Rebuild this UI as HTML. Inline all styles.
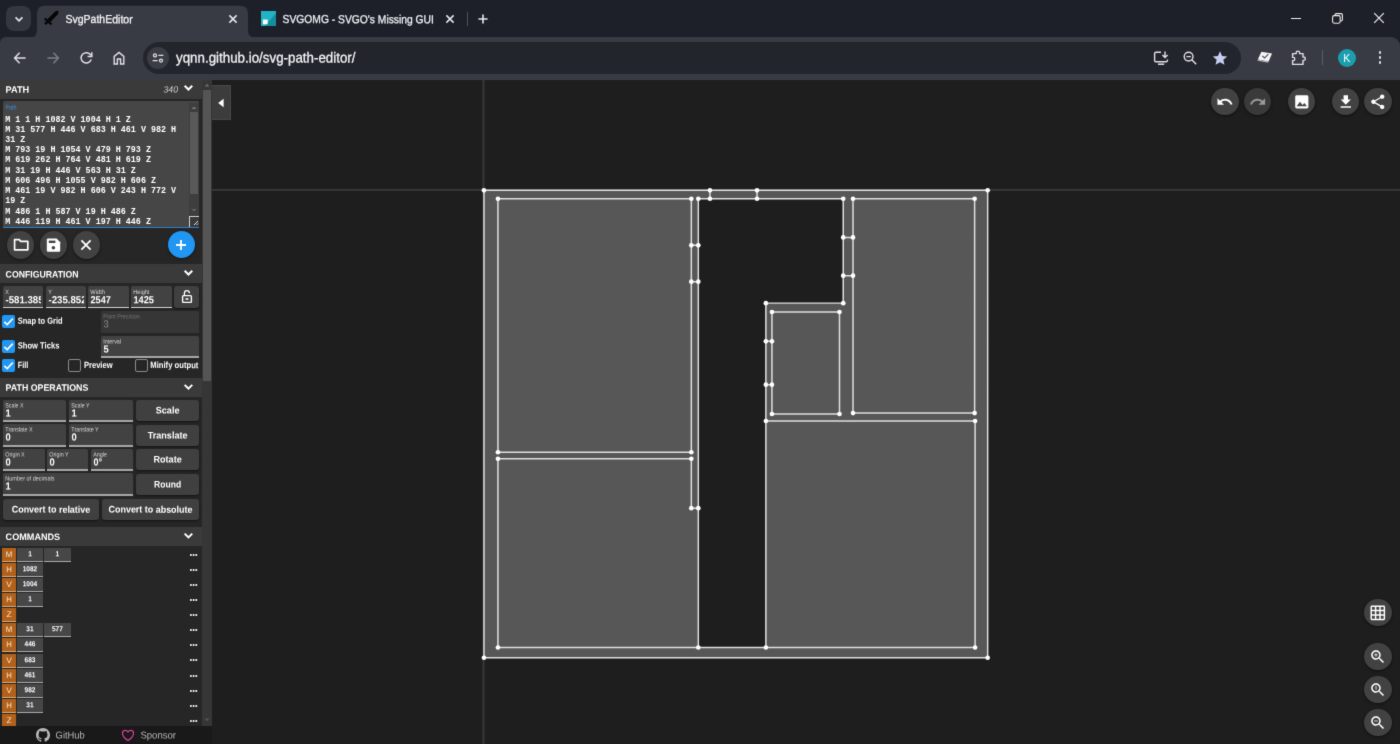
<!DOCTYPE html>
<html><head><meta charset="utf-8"><title>SvgPathEditor</title>
<style>
*{box-sizing:border-box;margin:0;padding:0}
html,body{width:1400px;height:744px;overflow:hidden;background:#1e1e1e}
body{filter:url(#bl);font-family:"Liberation Sans",sans-serif;}
div,span,svg{position:absolute}
.t{white-space:nowrap;line-height:1}
#tabstrip{left:0;top:0;width:1400px;height:45px;background:#1d2029}
#toolbar{left:0;top:37px;width:1400px;height:43px;background:#393b44;border-radius:6px 9px 0 0}
#tab1{left:0;top:0}
#tabsearch{left:6px;top:6px;width:25px;height:25px;border-radius:8px;background:#353740}
#url{left:143px;top:42px;width:1098px;height:32px;border-radius:16px;background:#23252c}
#left{left:0;top:80px;width:202px;height:646px;background:#262626}
#lsb{left:202px;top:80px;width:10px;height:646px;background:#363636}
#lthumb{left:203px;top:90px;width:8px;height:291px;background:#555}
#foot{left:0;top:726px;width:212px;height:18px;background:#191919}
.hdr{left:0;width:202px;height:19px;background:#3a3a3a}
.inp{background:#424242;border-bottom:2px solid #a6a6a6;border-radius:2px 2px 0 0;overflow:hidden}
.btn{background:#404040;border-radius:3px;box-shadow:0 1px 2px rgba(0,0,0,.5)}
.cb{width:13px;height:13px;border-radius:2px;background:#2196f3}
.cbo{width:13px;height:13px;border-radius:2px;border:1.5px solid #8a8a8a;background:#262626}
.circ{width:27px;height:27px;border-radius:50%;background:#424242;box-shadow:0 1px 3px rgba(0,0,0,.5)}
.cm{left:2px;width:14px;height:14px;background:#b2611b;border-bottom:1.5px solid #d9a877}
.cv{height:14px;background:#474747;border-bottom:1.5px solid #a8a8a8}
.dots{left:190px;width:8px;height:2px}
.dots i{position:absolute;top:0;width:1.8px;height:1.8px;background:#fff;border-radius:1px}
</style></head><body>
<svg width="0" height="0" style="left:0;top:0"><filter id="bl" x="0" y="0" width="100%" height="100%" color-interpolation-filters="sRGB"><feConvolveMatrix order="3" kernelMatrix="0.0113 0.0838 0.0113 0.0838 0.6196 0.0838 0.0113 0.0838 0.0113" edgeMode="duplicate" preserveAlpha="true"/></filter></svg>
<div id="tabstrip"></div><div id="toolbar"></div><svg id="tab1" width="270" height="40" viewBox="0 0 270 40"><path d="M29 38 Q37 38 37 30 V14 Q37 5.8 45 5.8 H240 Q248 5.8 248 14 V30 Q248 38 256 38 Z" fill="#393b44"/></svg><div id="tabsearch"></div><div id="url"></div>
<svg style="left:12.5px;top:12.5px" width="12" height="12" viewBox="0 0 12 12"><path d="M2.6 4.4 L6 7.8 L9.4 4.4" fill="none" stroke="#e4e5ea" stroke-width="1.7"/></svg>
<svg style="left:43px;top:10px" width="16" height="16" viewBox="43 10 16 16"><path d="M58.4 10.6 L58.2 14 L50.4 22 L47.4 19.2 L55.2 11.4 Z" fill="#060608"/><path d="M44.7 18.5 L51.5 24.3" stroke="#060608" stroke-width="2.3" fill="none"/><path d="M48.2 21.2 L45 24.2" stroke="#060608" stroke-width="2.4" fill="none"/></svg>
<svg style="left:227.2px;top:12.7px" width="12" height="12" viewBox="-6 -6 12 12"><path d="M-3.6 -3.6 L3.6 3.6 M3.6 -3.6 L-3.6 3.6" stroke="#e8e9ee" stroke-width="1.5" fill="none"/></svg>
<svg style="left:444.2px;top:12.7px" width="12" height="12" viewBox="-6 -6 12 12"><path d="M-3.6 -3.6 L3.6 3.6 M3.6 -3.6 L-3.6 3.6" stroke="#e8e9ee" stroke-width="1.5" fill="none"/></svg>
<svg style="left:260.8px;top:10.8px" width="15.2" height="15.2" viewBox="0 0 16 16"><rect width="16" height="16" fill="#22b3c6"/><path d="M16 2 V16 H4 Z" fill="#148e9f"/><rect x="2" y="9" width="5" height="5" fill="#fff"/></svg>
<div style="left:467px;top:12px;width:1px;height:13.5px;background:#50525a"></div>
<svg style="left:477px;top:12.5px" width="12" height="12" viewBox="-6 -6 12 12"><path d="M-4.6 0 H4.6 M0 -4.6 V4.6" stroke="#e8e9ee" stroke-width="1.6" fill="none"/></svg>
<div style="left:1291px;top:17.5px;width:10px;height:1.3px;background:#eee"></div>
<svg style="left:1331px;top:12px" width="13" height="13" viewBox="0 0 13 13"><rect x="1.6" y="3.6" width="7.6" height="7.6" rx="1.6" fill="none" stroke="#eee" stroke-width="1.1"/><path d="M4 3.4 V3 Q4 1.6 5.4 1.6 H10 Q11.4 1.6 11.4 3 V7.6 Q11.4 9 10 9 H9.6" fill="none" stroke="#eee" stroke-width="1.1"/></svg>
<svg style="left:1373px;top:12px" width="12" height="12" viewBox="-6 -6 12 12"><path d="M-4.8 -4.8 L4.8 4.8 M4.8 -4.8 L-4.8 4.8" stroke="#f0f0f0" stroke-width="1.2" fill="none"/></svg>
<svg style="left:13px;top:50.7px" width="14" height="14" viewBox="-7 -7 14 14"><path d="M5.6 0 H-5 M-0.4 -5.2 L-5.4 0 L-0.4 5.2" stroke="#dfe0e6" stroke-width="1.5" fill="none"/></svg>
<svg style="left:45.7px;top:50.7px" width="14" height="14" viewBox="-7 -7 14 14"><path d="M5.6 0 H-5 M-0.4 -5.2 L-5.4 0 L-0.4 5.2" transform="scale(-1,1)" stroke="#7c7e86" stroke-width="1.5" fill="none"/></svg>
<svg style="left:78.6px;top:50.6px" width="14" height="14" viewBox="-7 -7 14 14"><path d="M4.9 -2.6 A5.2 5.2 0 1 0 5.2 1.6" stroke="#dfe0e6" stroke-width="1.5" fill="none"/><path d="M5.8 -5.8 V-1.6 H1.6" stroke="#dfe0e6" stroke-width="1.5" fill="none"/></svg>
<svg style="left:111.5px;top:50.5px" width="14" height="14" viewBox="-7 -7 14 14"><path d="M-4.8 6 V-1.6 L0 -5.6 L4.8 -1.6 V6 H1.6 V1 H-1.6 V6 Z" stroke="#dfe0e6" stroke-width="1.4" fill="none" stroke-linejoin="miter"/></svg>
<div style="left:146.5px;top:47px;width:22px;height:22px;border-radius:11px;background:#3b3d45"></div>
<svg style="left:150.5px;top:51px" width="14" height="14" viewBox="-7 -7 14 14"><circle cx="-3" cy="-2.6" r="1.5" fill="none" stroke="#dfe0e6" stroke-width="1.3"/><path d="M0.4 -2.6 H5.4 M-5.4 2.6 H-0.4" stroke="#dfe0e6" stroke-width="1.4"/><circle cx="3" cy="2.6" r="1.5" fill="none" stroke="#dfe0e6" stroke-width="1.3"/></svg>
<svg style="left:1153px;top:50px" width="17" height="16" viewBox="0 0 17 16"><path d="M8 2.2 H3 Q1.6 2.2 1.6 3.6 V10.4 Q1.6 11.8 3 11.8 H13 Q14.4 11.8 14.4 10.4 V9.6" fill="none" stroke="#dfe0e6" stroke-width="1.4"/><path d="M5 14.2 H11.2" stroke="#dfe0e6" stroke-width="1.5"/><path d="M12 1.4 V7.4 M9.4 5 L12 7.6 L14.6 5" fill="none" stroke="#dfe0e6" stroke-width="1.4"/></svg>
<svg style="left:1182px;top:50px" width="16" height="16" viewBox="0 0 16 16"><circle cx="6.6" cy="6.6" r="4.4" fill="none" stroke="#dfe0e6" stroke-width="1.4"/><path d="M4.4 6.6 H8.8" stroke="#dfe0e6" stroke-width="1.3"/><path d="M9.8 9.8 L14.2 14.2" stroke="#dfe0e6" stroke-width="1.5"/></svg>
<svg style="left:1211.5px;top:49.5px" width="16" height="16" viewBox="0 0 24 24"><path d="M12 1.8 L15.1 8.9 L22.8 9.6 L17 14.7 L18.7 22.2 L12 18.2 L5.3 22.2 L7 14.7 L1.2 9.6 L8.9 8.9 Z" fill="#c6cff2"/></svg>
<svg style="left:1256px;top:50px" width="18" height="16" viewBox="0 0 18 16"><path d="M5.4 1.8 L16 3.4 L12.6 11.4 L1.8 9.4 Z" fill="#f4f4f6"/><path d="M1.8 9.4 L12.6 11.4 L12.2 12.8 L1.6 10.8Z" fill="#b0b2ba"/><path d="M6.2 5.8 L8.6 8 L12.4 4.2" stroke="#4a4c55" stroke-width="1.1" fill="none"/></svg>
<svg style="left:1289.5px;top:49px" width="17" height="18" viewBox="0 0 17 18"><path d="M2.6 4.6 H6.2 V3.8 A1.7 1.7 0 0 1 9.6 3.8 V4.6 H13 V8 H13.6 A1.7 1.7 0 0 1 13.6 11.4 H13 V15.4 H2.6 V11.6 H3.2 A1.6 1.6 0 0 0 3.2 8.4 H2.6 Z" fill="none" stroke="#dfe0e6" stroke-width="1.4" stroke-linejoin="round"/></svg>
<div style="left:1322px;top:50px;width:1px;height:14.5px;background:#5a5c64"></div>
<div style="left:1337.7px;top:48.5px;width:18.6px;height:18.6px;border-radius:50%;background:#1b9fae"></div>
<span class="t" style="left:1343.3px;top:52.8px;font-size:10.5px;color:#fff">K</span>
<div style="left:1378.7px;top:51.4px;width:2.6px;height:2.6px;border-radius:50%;background:#dfe0e6"></div>
<div style="left:1378.7px;top:56.4px;width:2.6px;height:2.6px;border-radius:50%;background:#dfe0e6"></div>
<div style="left:1378.7px;top:61.4px;width:2.6px;height:2.6px;border-radius:50%;background:#dfe0e6"></div>
<span class="t" style="left:65px;top:13px;font-size:11.6px;color:#f2f3f6;transform-origin:0 0;transform:translate(0.50px,0.10px) scale(0.9062,1.000) rotate(0.03deg);-webkit-text-stroke:0.3px #f2f3f6;">SvgPathEditor</span>
<span class="t" style="left:282px;top:13px;font-size:11.6px;color:#eceef2;transform-origin:0 0;transform:translate(0.60px,0.10px) scale(0.8883,1.000) rotate(0.03deg);-webkit-text-stroke:0.3px #eceef2;">SVGOMG - SVGO&#39;s Missing GUI</span>
<span class="t" style="left:176px;top:50px;font-size:14.5px;color:#f2f3f6;transform-origin:0 0;transform:translate(0.00px,0.50px) scale(0.9202,1.000) rotate(0.03deg);-webkit-text-stroke:0.3px #f2f3f6;">yqnn.github.io/svg-path-editor/</span>
<svg style="left:212px;top:80px" width="1188" height="664" viewBox="-581.385 -235.852 2547 1425">
<line x1="0" y1="-300" x2="0" y2="1300" stroke="#3a3a3a" stroke-width="4"/><line x1="-600" y1="0" x2="2000" y2="0" stroke="#3a3a3a" stroke-width="4"/>
<path d="M 1 1 H 1082 V 1004 H 1 Z M 31 577 H 446 V 683 H 461 V 982 H 31 Z M 793 19 H 1054 V 479 H 793 Z M 619 262 H 764 V 481 H 619 Z M 31 19 H 446 V 563 H 31 Z M 606 496 H 1055 V 982 H 606 Z M 461 19 V 982 H 606 V 243 H 772 V 19 Z M 486 1 H 587 V 19 H 486 Z M 446 119 H 461 V 197 H 446 Z M 772 102 H 793 V 184 H 772 Z M 606 325 H 619 V 418 H 606 Z" fill="#575757" stroke="#e0e0e0" stroke-width="3.2"/>
<g fill="#fff"><circle cx="1" cy="1" r="5"/><circle cx="1" cy="1004" r="5"/><circle cx="31" cy="19" r="5"/><circle cx="31" cy="563" r="5"/><circle cx="31" cy="577" r="5"/><circle cx="31" cy="982" r="5"/><circle cx="446" cy="19" r="5"/><circle cx="446" cy="119" r="5"/><circle cx="446" cy="197" r="5"/><circle cx="446" cy="563" r="5"/><circle cx="446" cy="577" r="5"/><circle cx="446" cy="683" r="5"/><circle cx="461" cy="19" r="5"/><circle cx="461" cy="119" r="5"/><circle cx="461" cy="197" r="5"/><circle cx="461" cy="683" r="5"/><circle cx="461" cy="982" r="5"/><circle cx="486" cy="1" r="5"/><circle cx="486" cy="19" r="5"/><circle cx="587" cy="1" r="5"/><circle cx="587" cy="19" r="5"/><circle cx="606" cy="243" r="5"/><circle cx="606" cy="325" r="5"/><circle cx="606" cy="418" r="5"/><circle cx="606" cy="496" r="5"/><circle cx="606" cy="982" r="5"/><circle cx="619" cy="262" r="5"/><circle cx="619" cy="325" r="5"/><circle cx="619" cy="418" r="5"/><circle cx="619" cy="481" r="5"/><circle cx="764" cy="262" r="5"/><circle cx="764" cy="481" r="5"/><circle cx="772" cy="19" r="5"/><circle cx="772" cy="102" r="5"/><circle cx="772" cy="184" r="5"/><circle cx="772" cy="243" r="5"/><circle cx="793" cy="19" r="5"/><circle cx="793" cy="102" r="5"/><circle cx="793" cy="184" r="5"/><circle cx="793" cy="479" r="5"/><circle cx="1054" cy="19" r="5"/><circle cx="1054" cy="479" r="5"/><circle cx="1055" cy="496" r="5"/><circle cx="1055" cy="982" r="5"/><circle cx="1082" cy="1" r="5"/><circle cx="1082" cy="1004" r="5"/></g>
</svg>
<div id="left"></div><div id="lsb"></div><div id="lthumb"></div>
<div class="hdr" style="top:80px"><span class="t" style="left:5px;top:5px;font-size:9.3px;color:#fff;font-weight:bold;transform-origin:0 0;transform:translate(0.60px,0.70px) scale(0.9860,1.000) rotate(0.03deg);">PATH</span><span class="t" style="left:163px;top:5px;font-size:9px;color:#d0d0d0;font-style:italic;transform-origin:0 0;transform:translate(0.40px,0.50px) scale(0.9723,1.000) rotate(0.03deg);">340</span><svg style="left:180px;top:0" width="16" height="19" viewBox="0 0 16 19"><path d="M4.65 5.7 L8.45 9.5 L12.25 5.7" fill="none" stroke="#fff" stroke-width="2"/></svg></div>
<div style="left:3px;top:101px;width:196px;height:127px;background:#464646;border-bottom:1.5px solid #2b7fc4;border-radius:2px 2px 0 0;overflow:hidden">
<span class="t" style="left:2px;top:3px;font-size:6.5px;color:#3f8fe0;transform-origin:0 0;transform:translate(0.50px,0.50px) scale(0.8227,1.000) rotate(0.03deg);">Path</span>
<span class="t" style="left:2.2px;top:14.50px;font-family:'Liberation Mono',monospace;font-weight:bold;font-size:8.4px;color:#fff;white-space:pre">M 1 1 H 1082 V 1004 H 1 Z</span>
<span class="t" style="left:2.2px;top:24.74px;font-family:'Liberation Mono',monospace;font-weight:bold;font-size:8.4px;color:#fff;white-space:pre">M 31 577 H 446 V 683 H 461 V 982 H</span>
<span class="t" style="left:2.2px;top:34.98px;font-family:'Liberation Mono',monospace;font-weight:bold;font-size:8.4px;color:#fff;white-space:pre">31 Z</span>
<span class="t" style="left:2.2px;top:45.22px;font-family:'Liberation Mono',monospace;font-weight:bold;font-size:8.4px;color:#fff;white-space:pre">M 793 19 H 1054 V 479 H 793 Z</span>
<span class="t" style="left:2.2px;top:55.46px;font-family:'Liberation Mono',monospace;font-weight:bold;font-size:8.4px;color:#fff;white-space:pre">M 619 262 H 764 V 481 H 619 Z</span>
<span class="t" style="left:2.2px;top:65.70px;font-family:'Liberation Mono',monospace;font-weight:bold;font-size:8.4px;color:#fff;white-space:pre">M 31 19 H 446 V 563 H 31 Z</span>
<span class="t" style="left:2.2px;top:75.94px;font-family:'Liberation Mono',monospace;font-weight:bold;font-size:8.4px;color:#fff;white-space:pre">M 606 496 H 1055 V 982 H 606 Z</span>
<span class="t" style="left:2.2px;top:86.18px;font-family:'Liberation Mono',monospace;font-weight:bold;font-size:8.4px;color:#fff;white-space:pre">M 461 19 V 982 H 606 V 243 H 772 V</span>
<span class="t" style="left:2.2px;top:96.42px;font-family:'Liberation Mono',monospace;font-weight:bold;font-size:8.4px;color:#fff;white-space:pre">19 Z</span>
<span class="t" style="left:2.2px;top:106.66px;font-family:'Liberation Mono',monospace;font-weight:bold;font-size:8.4px;color:#fff;white-space:pre">M 486 1 H 587 V 19 H 486 Z</span>
<span class="t" style="left:2.2px;top:116.90px;font-family:'Liberation Mono',monospace;font-weight:bold;font-size:8.4px;color:#fff;white-space:pre">M 446 119 H 461 V 197 H 446 Z</span>
<div style="left:186px;top:2px;width:10px;height:113px;background:#3e3e3e"></div>
<div style="left:187px;top:11px;width:8px;height:82px;background:#595959"></div>
<svg style="left:187px;top:4px" width="8" height="5" viewBox="0 0 8 5"><path d="M1.5 4 L4 1.5 L6.5 4Z" fill="#777"/></svg>
<svg style="left:187px;top:107px" width="8" height="5" viewBox="0 0 8 5"><path d="M1.5 1 L4 3.5 L6.5 1Z" fill="#666"/></svg>
<div style="left:186px;top:115px;width:10px;height:11px;background:#3a3a3a;border:1px solid #cfcfcf;border-right:none;border-bottom:none"></div>
<svg style="left:190px;top:119px" width="6" height="6" viewBox="0 0 6 6"><path d="M1 5 L5 1 M3.5 5 L5 3.5" stroke="#ddd" stroke-width="1"/></svg>
</div>
<div class="circ" style="left:6.6px;top:231.2px;width:27.4px;height:27.4px"></div>
<div class="circ" style="left:39.6px;top:231.2px;width:27.4px;height:27.4px"></div>
<div class="circ" style="left:72.5px;top:231.2px;width:27.4px;height:27.4px"></div>
<div class="circ" style="left:167.5px;top:231.1px;width:27.4px;height:27.4px;background:#2196f3"></div>
<svg style="left:12.6px;top:238.2px" width="16.4" height="13.4" viewBox="0 0 16.4 13.4"><path d="M1.6 1.6 H6.2 L7.8 3.4 H14.8 V11.8 H1.6 Z" fill="none" stroke="#fff" stroke-width="1.7" stroke-linejoin="round"/></svg>
<svg style="left:46px;top:237.6px" width="15" height="14.4" viewBox="0 0 15 14.4"><path d="M0.8 1.8 Q0.8 0.6 2 0.6 H10.6 L14.2 4.2 V12.6 Q14.2 13.8 13 13.8 H2 Q0.8 13.8 0.8 12.6 Z" fill="#fff"/><rect x="2.8" y="2.6" width="6.6" height="2.4" fill="#424242"/><circle cx="7.4" cy="9.8" r="1.8" fill="#424242"/></svg>
<svg style="left:80.2px;top:239px" width="12" height="12" viewBox="-6 -6 12 12"><path d="M-4.6 -4.6 L4.6 4.6 M4.6 -4.6 L-4.6 4.6" stroke="#fff" stroke-width="1.8"/></svg>
<svg style="left:175px;top:238.6px" width="12" height="12" viewBox="-6 -6 12 12"><path d="M-5 0 H5 M0 -5 V5" stroke="#fff" stroke-width="1.8"/></svg>
<div class="hdr" style="top:264px"><span class="t" style="left:5px;top:6px;font-size:9.3px;color:#fff;font-weight:bold;transform-origin:0 0;transform:translate(0.60px,0.50px) scale(0.9378,1.000) rotate(0.03deg);">CONFIGURATION</span><svg style="left:180px;top:0" width="16" height="19" viewBox="0 0 16 19"><path d="M4.65 6.7 L8.45 10.5 L12.25 6.7" fill="none" stroke="#fff" stroke-width="2"/></svg></div>
<div class="inp" style="left:3px;top:286px;width:40px;height:22.2px;border-bottom:1.3px solid #cfcfcf;"><div style="left:0;top:0;width:37.5px;height:22.2px;overflow:hidden"><span class="t" style="left:2px;top:3px;font-size:6.3px;color:#d8d8d8;transform-origin:0 0;transform:translate(0.30px,0.10px) scale(0.8567,1.000) rotate(0.03deg);">X</span><span class="t" style="left:2px;top:9px;font-size:10.3px;color:#fff;font-weight:bold;transform-origin:0 0;transform:translate(0.50px,0.30px) scale(0.9345,1.000) rotate(0.03deg);">-581.385</span></div></div>
<div class="inp" style="left:46px;top:286px;width:40px;height:22.2px;border-bottom:1.3px solid #cfcfcf;"><div style="left:0;top:0;width:37.5px;height:22.2px;overflow:hidden"><span class="t" style="left:2px;top:3px;font-size:6.3px;color:#d8d8d8;transform-origin:0 0;transform:translate(0.30px,0.10px) scale(0.8567,1.000) rotate(0.03deg);">Y</span><span class="t" style="left:2px;top:9px;font-size:10.3px;color:#fff;font-weight:bold;transform-origin:0 0;transform:translate(0.50px,0.30px) scale(0.9345,1.000) rotate(0.03deg);">-235.852</span></div></div>
<div class="inp" style="left:88px;top:286px;width:41px;height:22.2px;border-bottom:1.3px solid #cfcfcf;"><div style="left:0;top:0;width:38.5px;height:22.2px;overflow:hidden"><span class="t" style="left:2px;top:3px;font-size:6.3px;color:#d8d8d8;transform-origin:0 0;transform:translate(0.30px,0.10px) scale(0.9066,1.000) rotate(0.03deg);">Width</span><span class="t" style="left:2px;top:9px;font-size:10.3px;color:#fff;font-weight:bold;transform-origin:0 0;transform:translate(0.50px,0.30px) scale(0.8859,1.000) rotate(0.03deg);">2547</span></div></div>
<div class="inp" style="left:131px;top:286px;width:40.5px;height:22.2px;border-bottom:1.3px solid #cfcfcf;"><div style="left:0;top:0;width:38px;height:22.2px;overflow:hidden"><span class="t" style="left:2px;top:3px;font-size:6.3px;color:#d8d8d8;transform-origin:0 0;transform:translate(0.30px,0.10px) scale(0.8841,1.000) rotate(0.03deg);">Height</span><span class="t" style="left:2px;top:9px;font-size:10.3px;color:#fff;font-weight:bold;transform-origin:0 0;transform:translate(0.50px,0.30px) scale(0.8947,1.000) rotate(0.03deg);">1425</span></div></div>
<div class="btn" style="left:174.3px;top:286px;width:24.7px;height:22px"></div>
<svg style="left:180px;top:289px" width="14" height="16" viewBox="0 0 14 16"><path d="M4.4 6.4 V4.2 A2.5 2.5 0 0 1 9.4 4.2" fill="none" stroke="#fff" stroke-width="1.3"/><rect x="2.6" y="6.6" width="8.8" height="6.8" rx="0.8" fill="none" stroke="#fff" stroke-width="1.4"/><rect x="5.6" y="9.2" width="2.8" height="1.6" fill="#fff"/></svg>
<div class="cb" style="left:2px;top:315px"><svg style="left:1px;top:1px" width="11" height="11" viewBox="0 0 11 11"><path d="M1.3 5.8 L4.2 8.6 L9.8 2.6" fill="none" stroke="#fff" stroke-width="1.6"/></svg></div>
<span class="t" style="left:17px;top:316px;font-size:9px;color:#fff;font-weight:bold;transform-origin:0 0;transform:translate(0.70px,0.80px) scale(0.8315,1.000) rotate(0.03deg);">Snap to Grid</span>
<div class="inp" style="left:101px;top:311.3px;width:98px;height:21.8px;background:#363636;border-bottom-color:#363636;"><div style="left:0;top:0;width:95.5px;height:21.8px;overflow:hidden"><span class="t" style="left:2px;top:2px;font-size:6.3px;color:#777;transform-origin:0 0;transform:translate(0.30px,0.50px) scale(0.8710,1.000) rotate(0.03deg);">Point Precision</span><span class="t" style="left:2px;top:8px;font-size:10.3px;color:#8a8a8a;transform-origin:0 0;transform:translate(0.50px,0.40px) scale(0.9078,1.000) rotate(0.03deg);">3</span></div></div>
<div class="cb" style="left:2px;top:339.7px"><svg style="left:1px;top:1px" width="11" height="11" viewBox="0 0 11 11"><path d="M1.3 5.8 L4.2 8.6 L9.8 2.6" fill="none" stroke="#fff" stroke-width="1.6"/></svg></div>
<span class="t" style="left:17px;top:341px;font-size:9px;color:#fff;font-weight:bold;transform-origin:0 0;transform:translate(0.70px,0.60px) scale(0.8450,1.000) rotate(0.03deg);">Show Ticks</span>
<div class="inp" style="left:101px;top:335.8px;width:98px;height:22px;"><div style="left:0;top:0;width:95.5px;height:22px;overflow:hidden"><span class="t" style="left:2px;top:2px;font-size:6.3px;color:#d8d8d8;transform-origin:0 0;transform:translate(0.30px,0.50px) scale(0.8616,1.000) rotate(0.03deg);">Interval</span><span class="t" style="left:2px;top:8px;font-size:10.3px;color:#fff;font-weight:bold;transform-origin:0 0;transform:translate(0.50px,0.40px) scale(0.9078,1.000) rotate(0.03deg);">5</span></div></div>
<div class="cb" style="left:2px;top:358.8px"><svg style="left:1px;top:1px" width="11" height="11" viewBox="0 0 11 11"><path d="M1.3 5.8 L4.2 8.6 L9.8 2.6" fill="none" stroke="#fff" stroke-width="1.6"/></svg></div>
<span class="t" style="left:17px;top:361px;font-size:9px;color:#fff;font-weight:bold;transform-origin:0 0;transform:translate(0.70px,0.10px) scale(0.8078,1.000) rotate(0.03deg);">Fill</span>
<div class="cbo" style="left:68px;top:358.8px"></div>
<span class="t" style="left:83px;top:361px;font-size:9px;color:#fff;font-weight:bold;transform-origin:0 0;transform:translate(0.90px,0.10px) scale(0.8436,1.000) rotate(0.03deg);">Preview</span>
<div class="cbo" style="left:134.7px;top:358.8px"></div>
<span class="t" style="left:150px;top:361px;font-size:9px;color:#fff;font-weight:bold;transform-origin:0 0;transform:translate(0.30px,0.10px) scale(0.8516,1.000) rotate(0.03deg);">Minify output</span>
<div class="hdr" style="top:377.7px"><span class="t" style="left:5px;top:5px;font-size:9.3px;color:#fff;font-weight:bold;transform-origin:0 0;transform:translate(0.60px,0.70px) scale(0.9482,1.000) rotate(0.03deg);">PATH OPERATIONS</span><svg style="left:180px;top:0" width="16" height="19" viewBox="0 0 16 19"><path d="M4.65 6.9 L8.45 10.7 L12.25 6.9" fill="none" stroke="#fff" stroke-width="2"/></svg></div>
<div class="inp" style="left:3px;top:399.8px;width:63px;height:22.3px;"><div style="left:0;top:0;width:60.5px;height:22.3px;overflow:hidden"><span class="t" style="left:2px;top:2px;font-size:6.3px;color:#d8d8d8;transform-origin:0 0;transform:translate(0.30px,0.50px) scale(0.8429,1.000) rotate(0.03deg);">Scale X</span><span class="t" style="left:2px;top:8px;font-size:10.3px;color:#fff;font-weight:bold;transform-origin:0 0;transform:translate(0.50px,0.40px) scale(0.9078,1.000) rotate(0.03deg);">1</span></div></div>
<div class="inp" style="left:69.4px;top:399.8px;width:63.6px;height:22.3px;"><div style="left:0;top:0;width:61.1px;height:22.3px;overflow:hidden"><span class="t" style="left:2px;top:2px;font-size:6.3px;color:#d8d8d8;transform-origin:0 0;transform:translate(0.30px,0.50px) scale(0.8473,1.000) rotate(0.03deg);">Scale Y</span><span class="t" style="left:2px;top:8px;font-size:10.3px;color:#fff;font-weight:bold;transform-origin:0 0;transform:translate(0.50px,0.40px) scale(0.9078,1.000) rotate(0.03deg);">1</span></div></div>
<div class="btn" style="left:135.8px;top:400px;width:63.2px;height:21.3px"><span class="t" style="left:19px;top:5px;font-size:9.5px;color:#fff;font-weight:bold;transform-origin:0 0;transform:translate(0.75px,0.60px) scale(0.9546,1.000) rotate(0.03deg);">Scale</span></div>
<div class="inp" style="left:3px;top:424.3px;width:63px;height:22.3px;"><div style="left:0;top:0;width:60.5px;height:22.3px;overflow:hidden"><span class="t" style="left:2px;top:2px;font-size:6.3px;color:#d8d8d8;transform-origin:0 0;transform:translate(0.30px,0.50px) scale(0.8568,1.000) rotate(0.03deg);">Translate X</span><span class="t" style="left:2px;top:8px;font-size:10.3px;color:#fff;font-weight:bold;transform-origin:0 0;transform:translate(0.50px,0.40px) scale(0.9078,1.000) rotate(0.03deg);">0</span></div></div>
<div class="inp" style="left:69.4px;top:424.3px;width:63.6px;height:22.3px;"><div style="left:0;top:0;width:61.1px;height:22.3px;overflow:hidden"><span class="t" style="left:2px;top:2px;font-size:6.3px;color:#d8d8d8;transform-origin:0 0;transform:translate(0.30px,0.50px) scale(0.8598,1.000) rotate(0.03deg);">Translate Y</span><span class="t" style="left:2px;top:8px;font-size:10.3px;color:#fff;font-weight:bold;transform-origin:0 0;transform:translate(0.50px,0.40px) scale(0.9078,1.000) rotate(0.03deg);">0</span></div></div>
<div class="btn" style="left:135.8px;top:424.5px;width:63.2px;height:21.3px"><span class="t" style="left:11px;top:5px;font-size:9.5px;color:#fff;font-weight:bold;transform-origin:0 0;transform:translate(0.70px,0.60px) scale(0.9541,1.000) rotate(0.03deg);">Translate</span></div>
<div class="inp" style="left:3px;top:448.7px;width:41.5px;height:22.3px;"><div style="left:0;top:0;width:39px;height:22.3px;overflow:hidden"><span class="t" style="left:2px;top:2px;font-size:6.3px;color:#d8d8d8;transform-origin:0 0;transform:translate(0.30px,0.50px) scale(0.8525,1.000) rotate(0.03deg);">Origin X</span><span class="t" style="left:2px;top:8px;font-size:10.3px;color:#fff;font-weight:bold;transform-origin:0 0;transform:translate(0.50px,0.40px) scale(0.9078,1.000) rotate(0.03deg);">0</span></div></div>
<div class="inp" style="left:46.8px;top:448.7px;width:41.4px;height:22.3px;"><div style="left:0;top:0;width:38.9px;height:22.3px;overflow:hidden"><span class="t" style="left:2px;top:2px;font-size:6.3px;color:#d8d8d8;transform-origin:0 0;transform:translate(0.30px,0.50px) scale(0.8567,1.000) rotate(0.03deg);">Origin Y</span><span class="t" style="left:2px;top:8px;font-size:10.3px;color:#fff;font-weight:bold;transform-origin:0 0;transform:translate(0.50px,0.40px) scale(0.9078,1.000) rotate(0.03deg);">0</span></div></div>
<div class="inp" style="left:90.8px;top:448.7px;width:42.2px;height:22.3px;"><div style="left:0;top:0;width:39.7px;height:22.3px;overflow:hidden"><span class="t" style="left:2px;top:2px;font-size:6.3px;color:#d8d8d8;transform-origin:0 0;transform:translate(0.30px,0.50px) scale(0.8502,1.000) rotate(0.03deg);">Angle</span><span class="t" style="left:2px;top:8px;font-size:10.3px;color:#fff;font-weight:bold;transform-origin:0 0;transform:translate(0.50px,0.40px) scale(0.8733,1.000) rotate(0.03deg);">0&deg;</span></div></div>
<div class="btn" style="left:135.8px;top:448.9px;width:63.2px;height:21.3px"><span class="t" style="left:17px;top:5px;font-size:9.5px;color:#fff;font-weight:bold;transform-origin:0 0;transform:translate(0.50px,0.60px) scale(0.9541,1.000) rotate(0.03deg);">Rotate</span></div>
<div class="inp" style="left:3px;top:473.3px;width:130px;height:22.3px;"><div style="left:0;top:0;width:127.5px;height:22.3px;overflow:hidden"><span class="t" style="left:2px;top:2px;font-size:6.3px;color:#d8d8d8;transform-origin:0 0;transform:translate(0.30px,0.50px) scale(0.8783,1.000) rotate(0.03deg);">Number of decimals</span><span class="t" style="left:2px;top:8px;font-size:10.3px;color:#fff;font-weight:bold;transform-origin:0 0;transform:translate(0.50px,0.40px) scale(0.9078,1.000) rotate(0.03deg);">1</span></div></div>
<div class="btn" style="left:135.8px;top:473.8px;width:63.2px;height:21px"><span class="t" style="left:18px;top:5px;font-size:9.5px;color:#fff;font-weight:bold;transform-origin:0 0;transform:translate(0.05px,0.45px) scale(0.9011,1.000) rotate(0.03deg);">Round</span></div>
<div class="btn" style="left:3px;top:498.5px;width:96px;height:21.3px"><span class="t" style="left:8px;top:5px;font-size:9.5px;color:#fff;font-weight:bold;transform-origin:0 0;transform:translate(0.75px,0.60px) scale(0.9411,1.000) rotate(0.03deg);">Convert to relative</span></div>
<div class="btn" style="left:102px;top:498.5px;width:97px;height:21.3px"><span class="t" style="left:6px;top:5px;font-size:9.5px;color:#fff;font-weight:bold;transform-origin:0 0;transform:translate(0.55px,0.60px) scale(0.9406,1.000) rotate(0.03deg);">Convert to absolute</span></div>
<div class="hdr" style="top:527px"><span class="t" style="left:5px;top:6px;font-size:9.3px;color:#fff;font-weight:bold;transform-origin:0 0;transform:translate(0.60px,0.00px) scale(0.9786,1.000) rotate(0.03deg);">COMMANDS</span><svg style="left:180px;top:0" width="16" height="19" viewBox="0 0 16 19"><path d="M4.65 6.6 L8.45 10.4 L12.25 6.6" fill="none" stroke="#fff" stroke-width="2"/></svg></div>
<div class="cm" style="top:548.00px"><span class="t" style="left:3px;top:3px;font-size:8px;color:#f5e3cd;transform-origin:0 0;transform:translate(0.75px,0.00px) scale(0.9754,1.000) rotate(0.03deg);">M</span></div>
<div class="cv" style="left:17px;top:548.00px;width:26px"><span class="t" style="left:11px;top:2px;font-size:7.3px;color:#fff;font-weight:bold;transform-origin:0 0;transform:translate(0.19px,0.30px) scale(0.8941,1.000) rotate(0.03deg);">1</span></div>
<div class="cv" style="left:44.4px;top:548.00px;width:26.7px"><span class="t" style="left:11px;top:2px;font-size:7.3px;color:#fff;font-weight:bold;transform-origin:0 0;transform:translate(0.54px,0.30px) scale(0.8941,1.000) rotate(0.03deg);">1</span></div>
<svg style="left:189px;top:552.90px" width="10" height="4" viewBox="0 0 10 4"><circle cx="1.9" cy="2" r="1.05" fill="#fff"/><circle cx="4.6" cy="2" r="1.05" fill="#fff"/><circle cx="7.3" cy="2" r="1.05" fill="#fff"/></svg>
<div class="cm" style="top:563.08px"><span class="t" style="left:4px;top:3px;font-size:8px;color:#f5e3cd;transform-origin:0 0;transform:translate(0.20px,0.00px) scale(0.9693,1.000) rotate(0.03deg);">H</span></div>
<div class="cv" style="left:17px;top:563.08px;width:26px"><span class="t" style="left:5px;top:2px;font-size:7.3px;color:#fff;font-weight:bold;transform-origin:0 0;transform:translate(0.74px,0.30px) scale(0.8941,1.000) rotate(0.03deg);">1082</span></div>
<svg style="left:189px;top:567.98px" width="10" height="4" viewBox="0 0 10 4"><circle cx="1.9" cy="2" r="1.05" fill="#fff"/><circle cx="4.6" cy="2" r="1.05" fill="#fff"/><circle cx="7.3" cy="2" r="1.05" fill="#fff"/></svg>
<div class="cm" style="top:578.16px"><span class="t" style="left:4px;top:3px;font-size:8px;color:#f5e3cd;transform-origin:0 0;transform:translate(0.20px,0.00px) scale(1.0495,1.000) rotate(0.03deg);">V</span></div>
<div class="cv" style="left:17px;top:578.16px;width:26px"><span class="t" style="left:5px;top:2px;font-size:7.3px;color:#fff;font-weight:bold;transform-origin:0 0;transform:translate(0.74px,0.30px) scale(0.8941,1.000) rotate(0.03deg);">1004</span></div>
<svg style="left:189px;top:583.06px" width="10" height="4" viewBox="0 0 10 4"><circle cx="1.9" cy="2" r="1.05" fill="#fff"/><circle cx="4.6" cy="2" r="1.05" fill="#fff"/><circle cx="7.3" cy="2" r="1.05" fill="#fff"/></svg>
<div class="cm" style="top:593.24px"><span class="t" style="left:4px;top:3px;font-size:8px;color:#f5e3cd;transform-origin:0 0;transform:translate(0.20px,0.00px) scale(0.9693,1.000) rotate(0.03deg);">H</span></div>
<div class="cv" style="left:17px;top:593.24px;width:26px"><span class="t" style="left:11px;top:2px;font-size:7.3px;color:#fff;font-weight:bold;transform-origin:0 0;transform:translate(0.19px,0.30px) scale(0.8941,1.000) rotate(0.03deg);">1</span></div>
<svg style="left:189px;top:598.14px" width="10" height="4" viewBox="0 0 10 4"><circle cx="1.9" cy="2" r="1.05" fill="#fff"/><circle cx="4.6" cy="2" r="1.05" fill="#fff"/><circle cx="7.3" cy="2" r="1.05" fill="#fff"/></svg>
<div class="cm" style="top:608.32px"><span class="t" style="left:4px;top:3px;font-size:8px;color:#f5e3cd;transform-origin:0 0;transform:translate(0.40px,0.00px) scale(1.0641,1.000) rotate(0.03deg);">Z</span></div>
<svg style="left:189px;top:613.22px" width="10" height="4" viewBox="0 0 10 4"><circle cx="1.9" cy="2" r="1.05" fill="#fff"/><circle cx="4.6" cy="2" r="1.05" fill="#fff"/><circle cx="7.3" cy="2" r="1.05" fill="#fff"/></svg>
<div class="cm" style="top:623.40px"><span class="t" style="left:3px;top:3px;font-size:8px;color:#f5e3cd;transform-origin:0 0;transform:translate(0.75px,0.00px) scale(0.9754,1.000) rotate(0.03deg);">M</span></div>
<div class="cv" style="left:17px;top:623.40px;width:26px"><span class="t" style="left:9px;top:2px;font-size:7.3px;color:#fff;font-weight:bold;transform-origin:0 0;transform:translate(0.37px,0.30px) scale(0.8941,1.000) rotate(0.03deg);">31</span></div>
<div class="cv" style="left:44.4px;top:623.40px;width:26.7px"><span class="t" style="left:7px;top:2px;font-size:7.3px;color:#fff;font-weight:bold;transform-origin:0 0;transform:translate(0.90px,0.30px) scale(0.8941,1.000) rotate(0.03deg);">577</span></div>
<svg style="left:189px;top:628.30px" width="10" height="4" viewBox="0 0 10 4"><circle cx="1.9" cy="2" r="1.05" fill="#fff"/><circle cx="4.6" cy="2" r="1.05" fill="#fff"/><circle cx="7.3" cy="2" r="1.05" fill="#fff"/></svg>
<div class="cm" style="top:638.48px"><span class="t" style="left:4px;top:3px;font-size:8px;color:#f5e3cd;transform-origin:0 0;transform:translate(0.20px,0.00px) scale(0.9693,1.000) rotate(0.03deg);">H</span></div>
<div class="cv" style="left:17px;top:638.48px;width:26px"><span class="t" style="left:7px;top:2px;font-size:7.3px;color:#fff;font-weight:bold;transform-origin:0 0;transform:translate(0.55px,0.30px) scale(0.8941,1.000) rotate(0.03deg);">446</span></div>
<svg style="left:189px;top:643.38px" width="10" height="4" viewBox="0 0 10 4"><circle cx="1.9" cy="2" r="1.05" fill="#fff"/><circle cx="4.6" cy="2" r="1.05" fill="#fff"/><circle cx="7.3" cy="2" r="1.05" fill="#fff"/></svg>
<div class="cm" style="top:653.56px"><span class="t" style="left:4px;top:3px;font-size:8px;color:#f5e3cd;transform-origin:0 0;transform:translate(0.20px,0.00px) scale(1.0495,1.000) rotate(0.03deg);">V</span></div>
<div class="cv" style="left:17px;top:653.56px;width:26px"><span class="t" style="left:7px;top:2px;font-size:7.3px;color:#fff;font-weight:bold;transform-origin:0 0;transform:translate(0.55px,0.30px) scale(0.8941,1.000) rotate(0.03deg);">683</span></div>
<svg style="left:189px;top:658.46px" width="10" height="4" viewBox="0 0 10 4"><circle cx="1.9" cy="2" r="1.05" fill="#fff"/><circle cx="4.6" cy="2" r="1.05" fill="#fff"/><circle cx="7.3" cy="2" r="1.05" fill="#fff"/></svg>
<div class="cm" style="top:668.64px"><span class="t" style="left:4px;top:3px;font-size:8px;color:#f5e3cd;transform-origin:0 0;transform:translate(0.20px,0.00px) scale(0.9693,1.000) rotate(0.03deg);">H</span></div>
<div class="cv" style="left:17px;top:668.64px;width:26px"><span class="t" style="left:7px;top:2px;font-size:7.3px;color:#fff;font-weight:bold;transform-origin:0 0;transform:translate(0.55px,0.30px) scale(0.8941,1.000) rotate(0.03deg);">461</span></div>
<svg style="left:189px;top:673.54px" width="10" height="4" viewBox="0 0 10 4"><circle cx="1.9" cy="2" r="1.05" fill="#fff"/><circle cx="4.6" cy="2" r="1.05" fill="#fff"/><circle cx="7.3" cy="2" r="1.05" fill="#fff"/></svg>
<div class="cm" style="top:683.72px"><span class="t" style="left:4px;top:3px;font-size:8px;color:#f5e3cd;transform-origin:0 0;transform:translate(0.20px,0.00px) scale(1.0495,1.000) rotate(0.03deg);">V</span></div>
<div class="cv" style="left:17px;top:683.72px;width:26px"><span class="t" style="left:7px;top:2px;font-size:7.3px;color:#fff;font-weight:bold;transform-origin:0 0;transform:translate(0.55px,0.30px) scale(0.8941,1.000) rotate(0.03deg);">982</span></div>
<svg style="left:189px;top:688.62px" width="10" height="4" viewBox="0 0 10 4"><circle cx="1.9" cy="2" r="1.05" fill="#fff"/><circle cx="4.6" cy="2" r="1.05" fill="#fff"/><circle cx="7.3" cy="2" r="1.05" fill="#fff"/></svg>
<div class="cm" style="top:698.80px"><span class="t" style="left:4px;top:3px;font-size:8px;color:#f5e3cd;transform-origin:0 0;transform:translate(0.20px,0.00px) scale(0.9693,1.000) rotate(0.03deg);">H</span></div>
<div class="cv" style="left:17px;top:698.80px;width:26px"><span class="t" style="left:9px;top:2px;font-size:7.3px;color:#fff;font-weight:bold;transform-origin:0 0;transform:translate(0.37px,0.30px) scale(0.8941,1.000) rotate(0.03deg);">31</span></div>
<svg style="left:189px;top:703.70px" width="10" height="4" viewBox="0 0 10 4"><circle cx="1.9" cy="2" r="1.05" fill="#fff"/><circle cx="4.6" cy="2" r="1.05" fill="#fff"/><circle cx="7.3" cy="2" r="1.05" fill="#fff"/></svg>
<div class="cm" style="top:713.88px"><span class="t" style="left:4px;top:3px;font-size:8px;color:#f5e3cd;transform-origin:0 0;transform:translate(0.40px,0.00px) scale(1.0641,1.000) rotate(0.03deg);">Z</span></div>
<svg style="left:189px;top:718.78px" width="10" height="4" viewBox="0 0 10 4"><circle cx="1.9" cy="2" r="1.05" fill="#fff"/><circle cx="4.6" cy="2" r="1.05" fill="#fff"/><circle cx="7.3" cy="2" r="1.05" fill="#fff"/></svg>
<svg style="left:204px;top:718px" width="6" height="4" viewBox="0 0 6 4"><path d="M0.5 0.5 L3 3.2 L5.5 0.5Z" fill="#555"/></svg>
<svg style="left:204px;top:83px" width="6" height="4" viewBox="0 0 6 4"><path d="M0.5 3.5 L3 0.8 L5.5 3.5Z" fill="#6a6a6a"/></svg>
<div id="foot"></div>
<span class="t" style="left:55px;top:730px;font-size:10px;color:#b8b8b8;transform-origin:0 0;transform:translate(0.60px,0.40px) scale(0.9382,1.000) rotate(0.03deg);">GitHub</span>
<span class="t" style="left:140px;top:730px;font-size:10px;color:#b8b8b8;transform-origin:0 0;transform:translate(0.40px,0.40px) scale(0.9558,1.000) rotate(0.03deg);">Sponsor</span>
<svg style="left:35.9px;top:728.2px" width="14" height="14" viewBox="0 0 16 16"><path fill="#b8b8b8" d="M8 0C3.58 0 0 3.58 0 8c0 3.54 2.29 6.53 5.47 7.59.4.07.55-.17.55-.38 0-.19-.01-.82-.01-1.49-2.01.37-2.53-.49-2.69-.94-.09-.23-.48-.94-.82-1.13-.28-.15-.68-.52-.01-.53.63-.01 1.08.58 1.23.82.72 1.21 1.87.87 2.33.66.07-.52.28-.87.51-1.07-1.78-.2-3.64-.89-3.64-3.95 0-.87.31-1.59.82-2.15-.08-.2-.36-1.02.08-2.12 0 0 .67-.21 2.2.82.64-.18 1.32-.27 2-.27.68 0 1.36.09 2 .27 1.53-1.04 2.2-.82 2.2-.82.44 1.1.16 1.92.08 2.12.51.56.82 1.27.82 2.15 0 3.07-1.87 3.75-3.65 3.95.29.25.54.73.54 1.48 0 1.07-.01 1.93-.01 2.2 0 .21.15.46.55.38A8.013 8.013 0 0016 8c0-4.42-3.58-8-8-8z"/></svg><svg style="left:120.5px;top:728.5px" width="14" height="13" viewBox="0 0 16 16"><path fill="none" stroke="#d6409f" stroke-width="1.5" d="M8 14.2 C8 14.2 1.2 9.8 1.2 5.2 C1.2 3 2.9 1.6 4.6 1.6 C6 1.6 7.3 2.4 8 3.6 C8.7 2.4 10 1.6 11.4 1.6 C13.1 1.6 14.8 3 14.8 5.2 C14.8 9.8 8 14.2 8 14.2 Z"/></svg>
<div style="left:212px;top:85px;width:19px;height:35px;background:#3c3c3c;border:1px solid #484848;border-left:none"></div>
<svg style="left:217px;top:98px" width="8" height="10" viewBox="0 0 8 10"><path d="M1.2 5 L6.6 0.8 L6.6 9.2Z" fill="#fff"/></svg>
<div class="circ" style="left:1211px;top:87.5px;width:27.6px;height:27.6px;background:#424242"></div>
<svg style="left:1216px;top:92.5px" width="17.6" height="17.6" viewBox="0 0 24 24"><path fill="#fff" d="M12.5 8c-2.65 0-5.05.99-6.9 2.6L2 7v9h9l-3.62-3.62c1.39-1.16 3.16-1.88 5.12-1.88 3.54 0 6.55 2.31 7.6 5.5l2.37-.78C21.08 11.03 17.15 8 12.500 8z"/></svg>
<div class="circ" style="left:1243.9px;top:87.5px;width:27.6px;height:27.6px;background:#3a3a3a"></div>
<svg style="left:1248.9px;top:92.5px" width="17.6" height="17.6" viewBox="0 0 24 24"><path fill="#9a9a9a" d="M18.4 10.6C16.55 8.99 14.15 8 11.5 8c-4.65 0-8.58 3.03-9.96 7.22L3.900 16c1.050-3.190 4.050-5.500 7.600-5.500 1.950 0 3.730.720 5.120 1.880L13 16h9V7l-3.600 3.600z"/></svg>
<div class="circ" style="left:1287.7px;top:87.5px;width:27.6px;height:27.6px;background:#424242"></div>
<svg style="left:1292.7px;top:92.5px" width="17.6" height="17.6" viewBox="0 0 24 24"><path fill="#fff" d="M21 19V5c0-1.100-.900-2-2-2H5c-1.100 0-2 .900-2 2v14c0 1.100.900 2 2 2h14c1.100 0 2-.900 2-2zM8.500 13.500l2.500 3.010L14.500 12l4.500 6H5l3.500-4.500z" transform="translate(24,0) scale(-1,1)"/></svg>
<div class="circ" style="left:1331.5px;top:87.5px;width:27.6px;height:27.6px;background:#424242"></div>
<svg style="left:1336.5px;top:92.5px" width="17.6" height="17.6" viewBox="0 0 24 24"><path fill="#fff" d="M19 9h-4V3H9v6H5l7 7 7-7zM5 18v2h14v-2H5z"/></svg>
<div class="circ" style="left:1364.4px;top:87.5px;width:27.6px;height:27.6px;background:#424242"></div>
<svg style="left:1369.4px;top:92.5px" width="17.6" height="17.6" viewBox="0 0 24 24"><path fill="#fff" d="M18 16.080c-.760 0-1.440.300-1.960.770L8.910 12.700c.050-.230.090-.460.090-.700s-.040-.470-.090-.700l7.050-4.110c.540.500 1.250.810 2.040.810 1.660 0 3-1.340 3-3s-1.340-3-3-3-3 1.340-3 3c0 .240.040.470.090.700L8.040 9.810C7.500 9.310 6.790 9 6 9c-1.660 0-3 1.340-3 3s1.340 3 3 3c.790 0 1.500-.310 2.040-.810l7.120 4.160c-.050.210-.080.430-.080.650 0 1.610 1.310 2.920 2.920 2.920 1.610 0 2.920-1.310 2.920-2.920s-1.310-2.920-2.920-2.920z"/></svg>
<div class="circ" style="left:1364.1px;top:598.8px;width:27.6px;height:27.6px;background:#424242"></div>
<svg style="left:1369.1px;top:603.8px" width="17.6" height="17.6" viewBox="0 0 24 24"><path fill="#fff" d="M20 2H4c-1.100 0-2 .900-2 2v16c0 1.100.900 2 2 2h16c1.100 0 2-.900 2-2V4c0-1.100-.900-2-2-2zM8 20H4v-4h4v4zm0-6H4v-4h4v4zm0-6H4V4h4v4zm6 12h-4v-4h4v4zm0-6h-4v-4h4v4zm0-6h-4V4h4v4zm6 12h-4v-4h4v4zm0-6h-4v-4h4v4zm0-6h-4V4h4v4z"/></svg>
<div class="circ" style="left:1364.1px;top:642.8px;width:27.6px;height:27.6px;background:#424242"></div>
<svg style="left:1369.1px;top:647.8px" width="17.6" height="17.6" viewBox="0 0 24 24"><path fill="#fff" d="M15.500 14h-.790l-.280-.270C15.410 12.590 16 11.110 16 9.500 16 5.910 13.090 3 9.500 3S3 5.910 3 9.500 5.910 16 9.500 16c1.610 0 3.090-.590 4.230-1.570l.270.280v.790l5 4.990L20.490 19l-4.990-5zm-6 0C7.010 14 5 11.990 5 9.500S7.010 5 9.500 5 14 7.010 14 9.500 11.990 14 9.500 14z"/><path fill="#fff" d="M12 10h-2v2H9v-2H7V9h2V7h1v2h2v1z"/></svg>
<div class="circ" style="left:1364.1px;top:675.8px;width:27.6px;height:27.6px;background:#424242"></div>
<svg style="left:1369.1px;top:680.8px" width="17.6" height="17.6" viewBox="0 0 24 24"><path fill="#fff" d="M15.500 14h-.790l-.280-.270C15.410 12.590 16 11.110 16 9.500 16 5.910 13.090 3 9.500 3S3 5.910 3 9.500 5.910 16 9.500 16c1.610 0 3.090-.590 4.230-1.570l.270.280v.790l5 4.990L20.490 19l-4.990-5zm-6 0C7.010 14 5 11.990 5 9.500S7.010 5 9.500 5 14 7.010 14 9.500 11.990 14 9.500 14z"/><path fill="#fff" d="M9 7.300 L10.200 6.800 V12 H9.100 V8.200 L8.400 8.500 Z"/></svg>
<div class="circ" style="left:1364.1px;top:708.8px;width:27.6px;height:27.6px;background:#424242"></div>
<svg style="left:1369.1px;top:713.8px" width="17.6" height="17.6" viewBox="0 0 24 24"><path fill="#fff" d="M15.500 14h-.790l-.280-.270C15.410 12.590 16 11.110 16 9.500 16 5.910 13.090 3 9.500 3S3 5.910 3 9.500 5.910 16 9.500 16c1.610 0 3.090-.590 4.230-1.570l.270.280v.790l5 4.990L20.490 19l-4.990-5zm-6 0C7.010 14 5 11.990 5 9.500S7.010 5 9.500 5 14 7.010 14 9.500 11.990 14 9.500 14z"/><path fill="#fff" d="M7 9h5v1H7z"/></svg>
</body></html>
